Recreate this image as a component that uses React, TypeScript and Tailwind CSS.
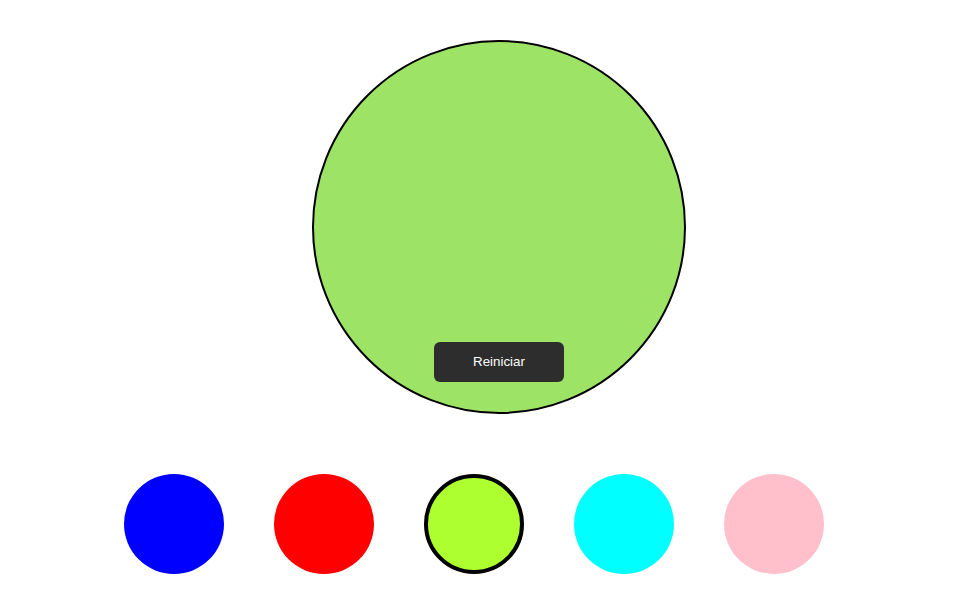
import { useState } from 'react'

const colors = ['#0000ff', '#ff0000', '#adff2f', '#00ffff', '#ffc0cb']

export default function App() {
  const [selected, setSelected] = useState(2)
  const [big, setBig] = useState('#9de366')

  return (
    <main className="min-h-screen bg-white font-['Liberation_Sans',Arial,sans-serif]">
      <div className="pt-[40px] pl-[312px]">
        <div
          className="relative w-[374px] h-[374px] rounded-full border-2 border-black"
          style={{ backgroundColor: big }}
        >
          <button
            onClick={() => setBig('#9de366')}
            className="absolute left-[120px] bottom-[30px] w-[130px] h-[40px] rounded-md bg-[#2d2d2d] text-white text-[13.333px]"
          >
            Reiniciar
          </button>
        </div>
      </div>
      <div className="flex gap-[50px] pl-[124px] mt-[60px]">
        {colors.map((c, i) => (
          <button
            key={c}
            onClick={() => setSelected(i)}
            className={
              i === selected
                ? 'w-[100px] h-[100px] rounded-full border-4 border-black'
                : 'w-[100px] h-[100px] rounded-full'
            }
            style={{ backgroundColor: c }}
          />
        ))}
      </div>
    </main>
  )
}
